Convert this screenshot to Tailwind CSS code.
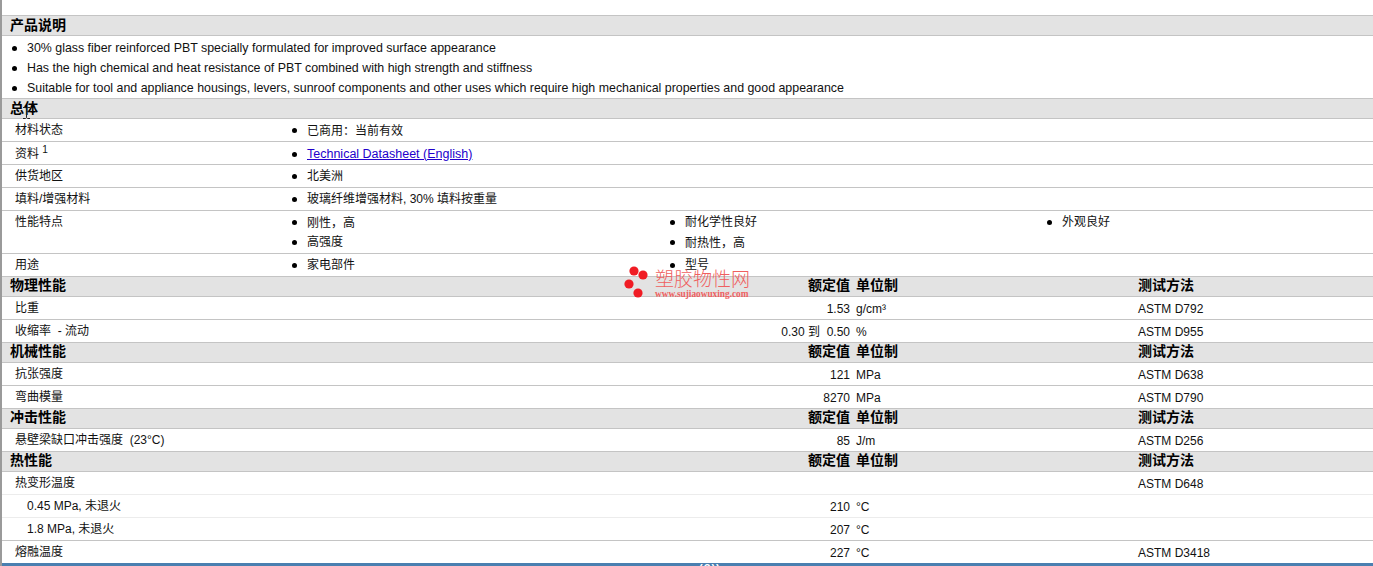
<!DOCTYPE html>
<html lang="zh">
<head>
    <meta charset="UTF-8">
    <title>产品说明</title>
    <script src="https://cdn.jsdelivr.net/npm/@tailwindcss/browser@4"></script>
</head>
<body class="bg-white overflow-hidden">
<div class="relative h-[566px] border-l-2 border-[#9a9a9a] font-['Liberation_Sans','Noto_Sans_CJK_SC',sans-serif] text-[12px] text-[#111] overflow-hidden">
    <div class="h-[15px]"></div>

    <!-- 产品说明 -->
    <div class="h-[21px] border-y border-[#c4c4c4] bg-[#e3e3e3] pl-2 text-[14px] font-bold leading-[19px] text-black">产品说明</div>
    <ul class="h-[62px] pl-[10px] pt-[2px] text-[12.4px]">
        <li class="flex h-[20px] items-center gap-[10px]"><i class="h-[5px] w-[5px] rounded-full bg-black"></i>30% glass fiber reinforced PBT specially formulated for improved surface appearance</li>
        <li class="flex h-[20px] items-center gap-[10px]"><i class="h-[5px] w-[5px] rounded-full bg-black"></i>Has the high chemical and heat resistance of PBT combined with high strength and stiffness</li>
        <li class="flex h-[20px] items-center gap-[10px]"><i class="h-[5px] w-[5px] rounded-full bg-black"></i>Suitable for tool and appliance housings, levers, sunroof components and other uses which require high mechanical properties and good appearance</li>
    </ul>

    <!-- 总体 -->
    <div class="h-[21px] border-y border-[#c4c4c4] bg-[#e3e3e3] pl-2 text-[14px] font-bold leading-[19px] text-black">总体</div>
    <div class="grid h-[23px] grid-cols-[277px_1fr] items-center border-b border-[#c4c4c4] pl-[13px]">
        <span>材料状态</span>
        <span class="flex items-center gap-[10px]"><i class="h-[5px] w-[5px] rounded-full bg-black"></i><span>已商用<span class="font-['Noto_Sans_CJK_TC']">：</span>当前有效</span></span>
    </div>
    <div class="grid h-[23px] grid-cols-[277px_1fr] items-center border-b border-[#c4c4c4] pl-[13px] pt-[2px]">
        <span>资料 <sup class="text-[10px]">1</sup></span>
        <span class="flex items-center gap-[10px]"><i class="h-[5px] w-[5px] rounded-full bg-black"></i><a href="#" class="text-[12.5px] text-[#2200cc] underline">Technical Datasheet (English)</a></span>
    </div>
    <div class="grid h-[23px] grid-cols-[277px_1fr] items-center border-b border-[#c4c4c4] pl-[13px]">
        <span>供货地区</span>
        <span class="flex items-center gap-[10px]"><i class="h-[5px] w-[5px] rounded-full bg-black"></i>北美洲</span>
    </div>
    <div class="grid h-[23px] grid-cols-[277px_1fr] items-center border-b border-[#c4c4c4] pl-[13px]">
        <span>填料/增强材料</span>
        <span class="flex items-center gap-[10px]"><i class="h-[5px] w-[5px] rounded-full bg-black"></i>玻璃纤维增强材料, 30% 填料按重量</span>
    </div>
    <div class="grid h-[43px] grid-cols-[277px_378px_377px_1fr] border-b border-[#c4c4c4] pl-[13px] pt-[1px]">
        <span class="leading-[20px]">性能特点</span>
        <div>
            <div class="flex h-[20px] items-center gap-[10px]"><i class="h-[5px] w-[5px] rounded-full bg-black"></i><span>刚性<span class="font-['Noto_Sans_CJK_TC']">，</span>高</span></div>
            <div class="flex h-[20px] items-center gap-[10px]"><i class="h-[5px] w-[5px] rounded-full bg-black"></i>高强度</div>
        </div>
        <div>
            <div class="flex h-[20px] items-center gap-[10px]"><i class="h-[5px] w-[5px] rounded-full bg-black"></i>耐化学性良好</div>
            <div class="flex h-[20px] items-center gap-[10px]"><i class="h-[5px] w-[5px] rounded-full bg-black"></i><span>耐热性<span class="font-['Noto_Sans_CJK_TC']">，</span>高</span></div>
        </div>
        <div>
            <div class="flex h-[20px] items-center gap-[10px]"><i class="h-[5px] w-[5px] rounded-full bg-black"></i>外观良好</div>
        </div>
    </div>
    <div class="grid h-[22px] grid-cols-[277px_378px_1fr] items-center pl-[13px]">
        <span>用途</span>
        <span class="flex items-center gap-[10px]"><i class="h-[5px] w-[5px] rounded-full bg-black"></i>家电部件</span>
        <span class="flex items-center gap-[10px]"><i class="h-[5px] w-[5px] rounded-full bg-black"></i>型号</span>
    </div>

    <!-- 物理性能 -->
    <div class="grid h-[21px] grid-cols-[840px_288px_1fr] items-center border-y border-[#c4c4c4] bg-[#e3e3e3] pb-[2px] pl-2 text-[14px] leading-[15px] font-bold text-black">
        <span class="flex justify-between"><span>物理性能</span><span>额定值</span></span>
        <span class="pl-[6px]">单位制</span><span>测试方法</span>
    </div>
    <div class="grid h-[23px] grid-cols-[835px_288px_1fr] items-center border-b border-[#c4c4c4] pl-[13px]">
        <span class="flex items-center justify-between"><span>比重</span><span class="pt-[2px]">1.53</span></span>
        <span class="pl-[6px] pt-[2px]">g/cm³</span><span class="pt-[2px]">ASTM D792</span>
    </div>
    <div class="grid h-[22px] grid-cols-[835px_288px_1fr] items-center pl-[13px]">
        <span class="flex items-center justify-between"><span>收缩率 &nbsp;- 流动</span><span class="pt-[2px]">0.30 到&nbsp; 0.50</span></span>
        <span class="pl-[6px] pt-[2px]">%</span><span class="pt-[2px]">ASTM D955</span>
    </div>

    <!-- 机械性能 -->
    <div class="grid h-[21px] grid-cols-[840px_288px_1fr] items-center border-y border-[#c4c4c4] bg-[#e3e3e3] pb-[2px] pl-2 text-[14px] leading-[15px] font-bold text-black">
        <span class="flex justify-between"><span>机械性能</span><span>额定值</span></span>
        <span class="pl-[6px]">单位制</span><span>测试方法</span>
    </div>
    <div class="grid h-[23px] grid-cols-[835px_288px_1fr] items-center border-b border-[#c4c4c4] pl-[13px]">
        <span class="flex items-center justify-between"><span>抗张强度</span><span class="pt-[2px]">121</span></span>
        <span class="pl-[6px] pt-[2px]">MPa</span><span class="pt-[2px]">ASTM D638</span>
    </div>
    <div class="grid h-[22px] grid-cols-[835px_288px_1fr] items-center pl-[13px]">
        <span class="flex items-center justify-between"><span>弯曲模量</span><span class="pt-[2px]">8270</span></span>
        <span class="pl-[6px] pt-[2px]">MPa</span><span class="pt-[2px]">ASTM D790</span>
    </div>

    <!-- 冲击性能 -->
    <div class="grid h-[21px] grid-cols-[840px_288px_1fr] items-center border-y border-[#c4c4c4] bg-[#e3e3e3] pb-[2px] pl-2 text-[14px] leading-[15px] font-bold text-black">
        <span class="flex justify-between"><span>冲击性能</span><span>额定值</span></span>
        <span class="pl-[6px]">单位制</span><span>测试方法</span>
    </div>
    <div class="grid h-[22px] grid-cols-[835px_288px_1fr] items-center pl-[13px]">
        <span class="flex items-center justify-between"><span>悬壁梁缺口冲击强度 &nbsp;(23°C)</span><span class="pt-[2px]">85</span></span>
        <span class="pl-[6px] pt-[2px]">J/m</span><span class="pt-[2px]">ASTM D256</span>
    </div>

    <!-- 热性能 -->
    <div class="grid h-[21px] grid-cols-[840px_288px_1fr] items-center border-y border-[#c4c4c4] bg-[#e3e3e3] pb-[2px] pl-2 text-[14px] leading-[15px] font-bold text-black">
        <span class="flex justify-between"><span>热性能</span><span>额定值</span></span>
        <span class="pl-[6px]">单位制</span><span>测试方法</span>
    </div>
    <div class="grid h-[23px] grid-cols-[835px_288px_1fr] items-center border-b border-[#ececec] pl-[13px]">
        <span>热变形温度</span><span></span><span class="pt-[2px]">ASTM D648</span>
    </div>
    <div class="grid h-[23px] grid-cols-[835px_288px_1fr] items-center border-b border-[#ececec] pl-[13px]">
        <span class="flex items-center justify-between pl-[12px]"><span>0.45 MPa, 未退火</span><span class="pt-[2px]">210</span></span>
        <span class="pl-[6px] pt-[2px]">°C</span><span></span>
    </div>
    <div class="grid h-[23px] grid-cols-[835px_288px_1fr] items-center border-b border-[#c4c4c4] pl-[13px]">
        <span class="flex items-center justify-between pl-[12px]"><span>1.8 MPa, 未退火</span><span class="pt-[2px]">207</span></span>
        <span class="pl-[6px] pt-[2px]">°C</span><span></span>
    </div>
    <div class="grid h-[22px] grid-cols-[835px_288px_1fr] items-center pl-[13px]">
        <span class="flex items-center justify-between"><span>熔融温度</span><span class="pt-[2px]">227</span></span>
        <span class="pl-[6px] pt-[2px]">°C</span><span class="pt-[2px]">ASTM D3418</span>
    </div>

    <!-- 底部蓝条 -->
    <div class="absolute inset-x-0 bottom-0 h-[3px] overflow-hidden bg-[#4a7fb0]">
        <span class="absolute left-[697px] top-0 text-[11px] font-bold leading-[11px] tracking-[1px] text-white">(?))</span>
    </div>

    <!-- 水印 -->
    <div class="absolute left-[622px] top-[265px] h-[36px] w-[130px]">
        <svg class="absolute left-0 top-0" width="32" height="36" viewBox="0 0 32 36"><circle cx="10" cy="6" r="4.6" fill="#f01c24"/><circle cx="19" cy="10" r="4.6" fill="#f01c24"/><circle cx="5" cy="19" r="4.6" fill="#f01c24"/><circle cx="14" cy="28" r="4.6" fill="#f01c24"/></svg>
        <div class="absolute left-[31px] top-[3px] font-['Noto_Sans_CJK_SC',sans-serif] text-[19px] leading-[19px] font-light whitespace-nowrap text-[#ef5f5f]">塑胶物性网</div>
        <div class="absolute left-[31px] top-[24px] font-['Liberation_Serif',serif] text-[9.3px] font-bold leading-[10px] whitespace-nowrap text-[#ef5f5f]">www.sujiaowuxing.com</div>
    </div>

    <!-- 鼠标光标 -->
    <svg class="absolute left-[21px] top-[107px]" width="7" height="12" viewBox="0 0 7 12" fill="none" stroke="#222" stroke-width="1"><path d="M0 .5h2.5l1 1 1-1H7M3.5 1.5v9M0 11.5h2.5l1-1 1 1H7"/></svg>
</div>
</body>
</html>
